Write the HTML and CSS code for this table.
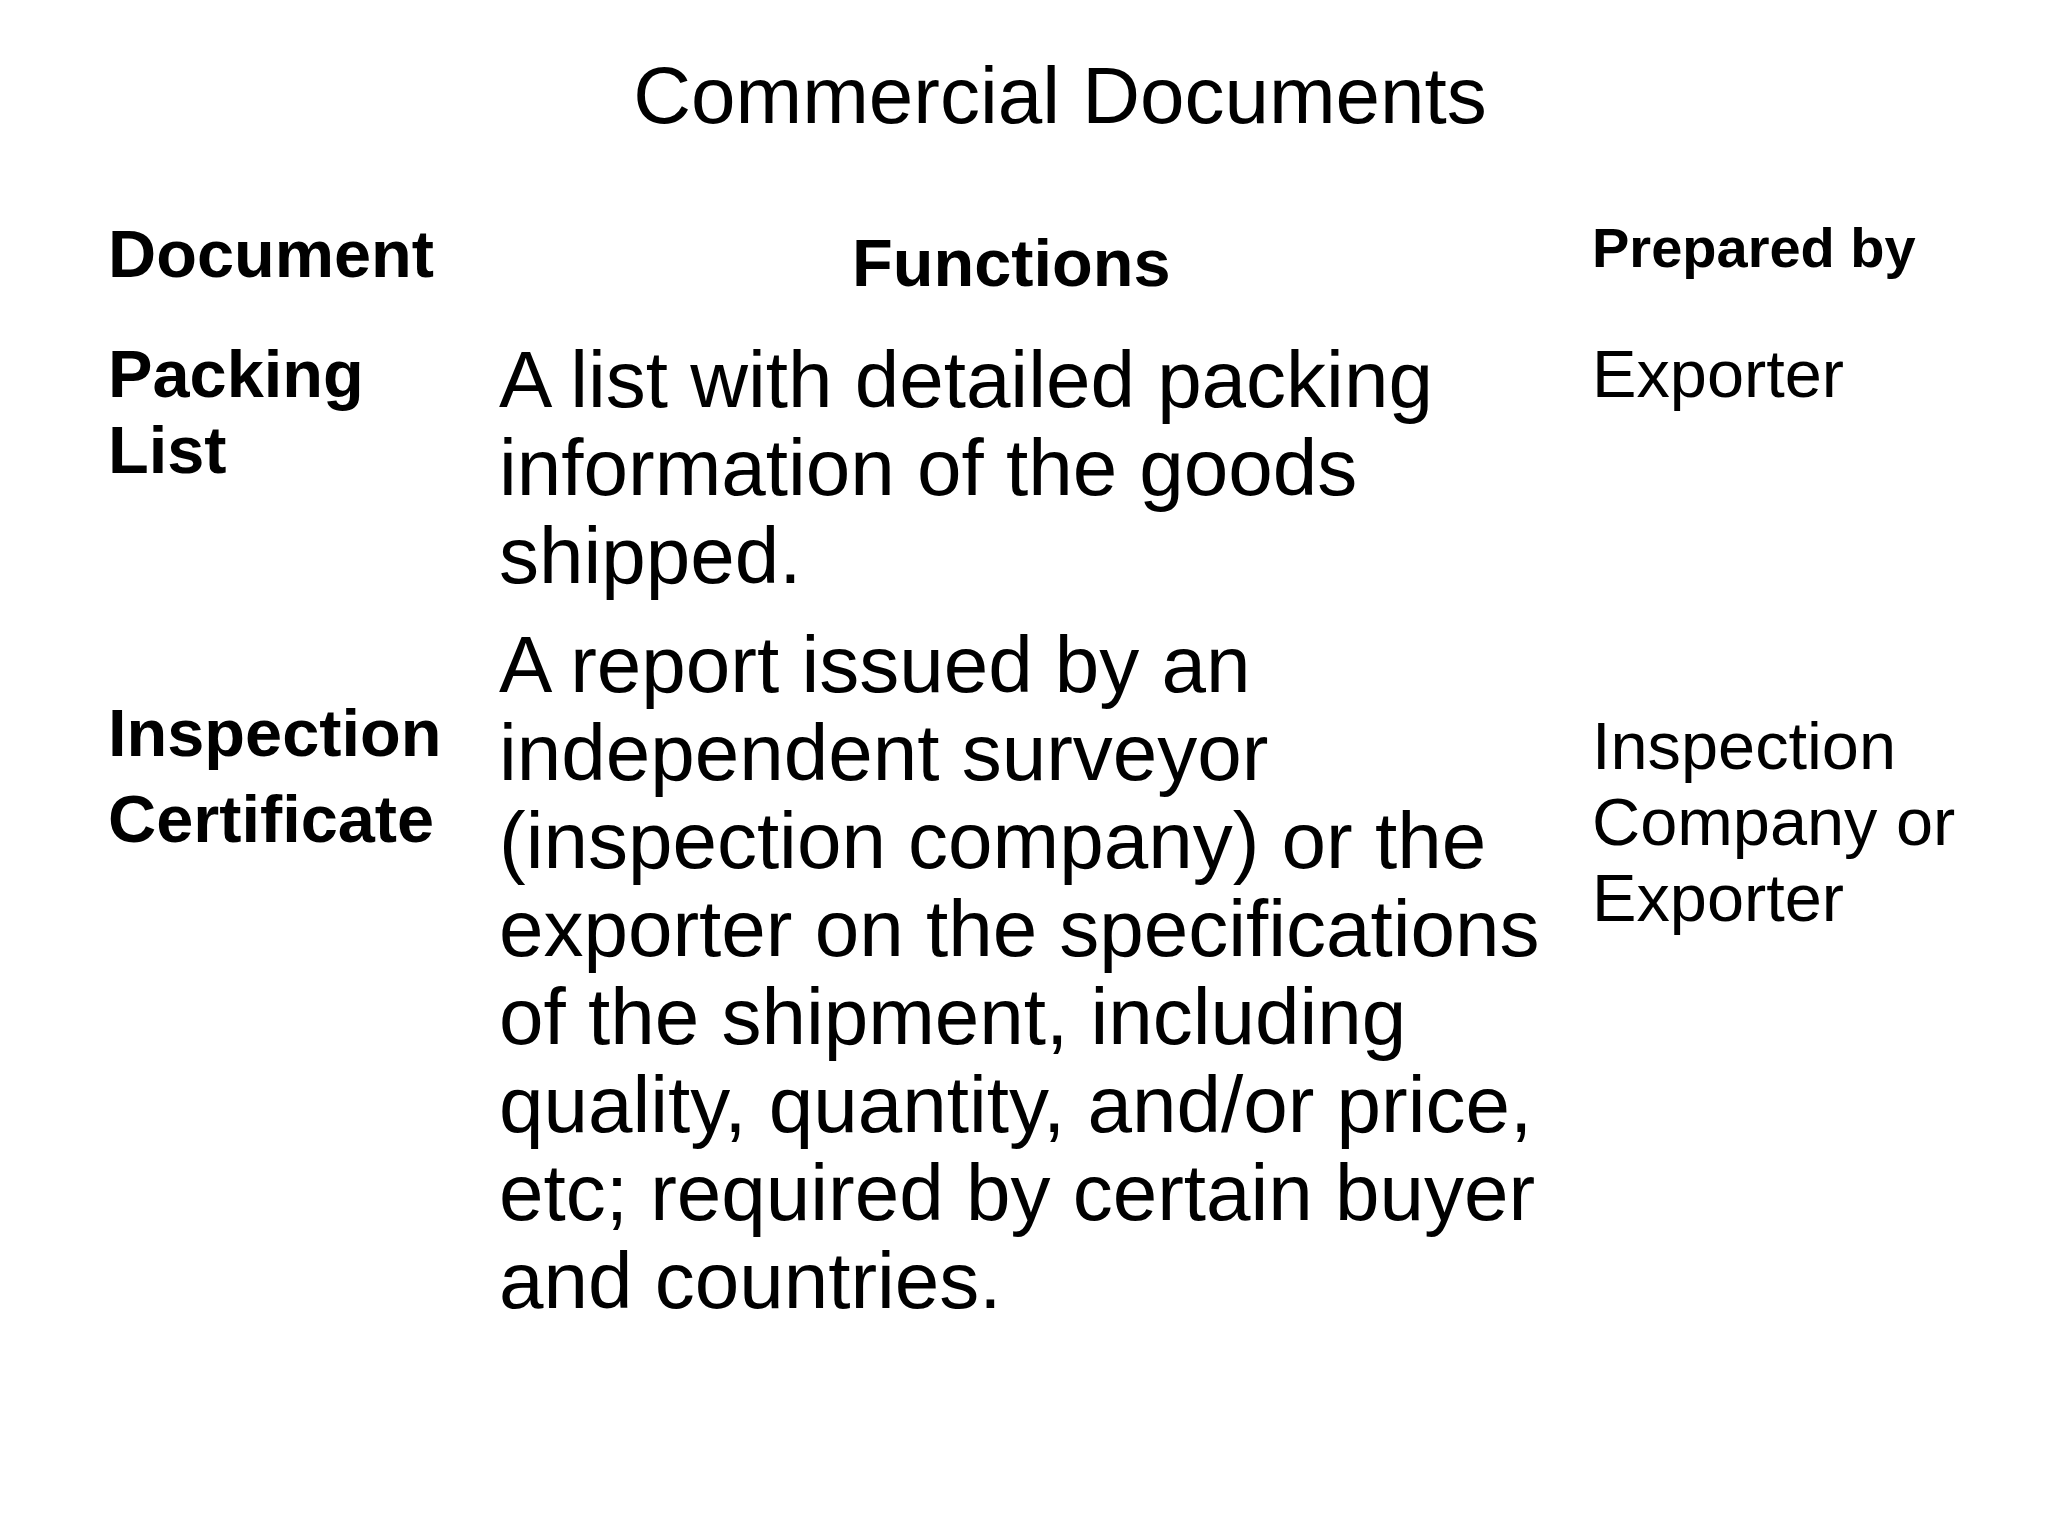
FILE: index.html
```html
<!DOCTYPE html>
<html lang="en">
<head>
<meta charset="utf-8">
<title>Commercial Documents</title>
<link rel="stylesheet" href="styles.css">
</head>
<body>
<main class="slide">
  <h1 class="title">Commercial Documents</h1>
  <section class="table">
    <div class="row row-head">
      <div class="cell c-doc"><span class="head">Document</span></div>
      <div class="cell c-fn fn-head"><span class="head">Functions</span></div>
      <div class="cell c-by by-head"><span class="head-sm">Prepared by</span></div>
    </div>
    <div class="row row-packing">
      <div class="cell c-doc doc-name">Packing List</div>
      <div class="cell c-fn fn-text">A list with detailed packing information of the goods shipped.</div>
      <div class="cell c-by by-text">Exporter</div>
    </div>
    <div class="row row-inspection">
      <div class="cell c-doc doc-name doc-tall">Inspection Certificate</div>
      <div class="cell c-fn fn-text">A report issued by an independent surveyor (inspection company) or the exporter on the specifications of the shipment, including quality, quantity, and/or price, etc; required by certain buyer and countries.</div>
      <div class="cell c-by by-text by-low">Inspection Company or Exporter</div>
    </div>
  </section>
</main>
</body>
</html>
```

FILE: styles.css
```css
* { box-sizing: border-box; }

html, body {
  margin: 0;
  padding: 0;
  background: #ffffff;
}

body {
  width: 2048px;
  height: 1536px;
  overflow: hidden;
  font-family: "Liberation Sans", Arial, sans-serif;
  color: #000000;
}

.slide {
  display: flex;
  flex-direction: column;
  padding-top: 50px;
}

.title {
  margin: 0;
  padding-left: 72px;
  text-align: center;
  font-size: 80px;
  font-weight: 400;
  line-height: 92px;
}

.table {
  display: flex;
  flex-direction: column;
}

.row {
  display: grid;
  grid-template-columns: 391px 1093px 1fr;
  padding-left: 108px;
  align-items: start;
}

.row-head { margin-top: 74px; }
.row-packing { margin-top: 34px; }
.row-inspection { margin-top: 21px; }

.c-doc { padding-right: 30px; }

.head {
  display: block;
  font-size: 66.7px;
  font-weight: 700;
  line-height: 77px;
}

.fn-head { padding-top: 9px; padding-left: 353px; }

.head-sm {
  display: block;
  font-size: 56px;
  font-weight: 700;
  line-height: 64px;
}

.doc-name {
  font-size: 66.7px;
  font-weight: 700;
  line-height: 76px;
}

.doc-tall {
  padding-top: 69px;
  line-height: 86px;
}

.fn-text {
  font-size: 80px;
  line-height: 88px;
}

.by-text {
  font-size: 66.7px;
  line-height: 76px;
}

.by-low { padding-top: 87px; }
```
